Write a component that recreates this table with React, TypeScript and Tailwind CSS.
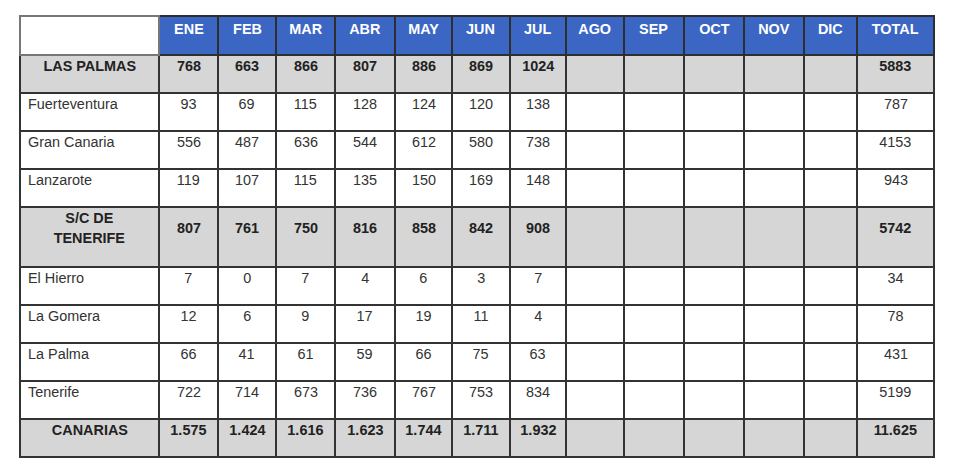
const months = ["ENE", "FEB", "MAR", "ABR", "MAY", "JUN", "JUL", "AGO", "SEP", "OCT", "NOV", "DIC"];
const widths = [139, 59, 58, 59, 60, 57, 58, 56, 58, 60, 60, 60, 53, 77];

type Row = { name: string; values: string[]; total: string; bold?: boolean; tall?: boolean };

const rows: Row[] = [
  { name: "LAS PALMAS", values: ["768", "663", "866", "807", "886", "869", "1024"], total: "5883", bold: true },
  { name: "Fuerteventura", values: ["93", "69", "115", "128", "124", "120", "138"], total: "787" },
  { name: "Gran Canaria", values: ["556", "487", "636", "544", "612", "580", "738"], total: "4153" },
  { name: "Lanzarote", values: ["119", "107", "115", "135", "150", "169", "148"], total: "943" },
  { name: "S/C DE TENERIFE", values: ["807", "761", "750", "816", "858", "842", "908"], total: "5742", bold: true, tall: true },
  { name: "El Hierro", values: ["7", "0", "7", "4", "6", "3", "7"], total: "34" },
  { name: "La Gomera", values: ["12", "6", "9", "17", "19", "11", "4"], total: "78" },
  { name: "La Palma", values: ["66", "41", "61", "59", "66", "75", "63"], total: "431" },
  { name: "Tenerife", values: ["722", "714", "673", "736", "767", "753", "834"], total: "5199" },
  { name: "CANARIAS", values: ["1.575", "1.424", "1.616", "1.623", "1.744", "1.711", "1.932"], total: "11.625", bold: true },
];

// the source sheet uses a narrow face; squeeze Arial-width text to match
function T({ children, left }: { children: React.ReactNode; left?: boolean }) {
  return (
    <span className={`inline-block scale-x-[0.93] ${left ? "origin-left" : "origin-center"}`}>
      {children}
    </span>
  );
}

export default function App() {
  return (
    <div className="h-[472px] w-[955px] bg-white pl-[19px] pt-[15px] font-['Liberation_Sans',Arial,sans-serif] text-[15.5px] leading-[17px]">
      <table className="w-[914px] table-fixed border-collapse border-2 border-[#555]">
        <colgroup>
          {widths.map((w, i) => (
            <col key={i} style={{ width: w }} />
          ))}
        </colgroup>
        <thead>
          <tr className="h-[39px]">
            <th className="border-2 border-[#777] bg-white" />
            {[...months, "TOTAL"].map((m) => (
              <th
                key={m}
                className="border-2 border-[#2e2e2e] bg-[#3b66c4] pt-[3px] align-top font-bold text-white"
              >
                <T>{m}</T>
              </th>
            ))}
          </tr>
        </thead>
        <tbody>
          {rows.map((r) => {
            const cell = r.bold
              ? "border-2 border-[#333] bg-[#d6d6d6] text-center align-top font-bold text-[#222]"
              : "border-2 border-[#333] bg-white text-center align-top text-[#333]";
            const pad = r.tall ? "pt-[11px]" : "pt-[1px]";
            return (
              <tr key={r.name} className={r.tall ? "h-[60px]" : "h-[38px]"}>
                <td
                  className={
                    r.bold
                      ? "border-2 border-[#333] bg-[#d6d6d6] px-2 pt-0 text-center align-top font-bold leading-[20px] text-[#222]"
                      : "border-2 border-[#333] bg-white px-[7px] pt-[1px] align-top text-[#333]"
                  }
                >
                  {r.tall ? (
                    <T>
                      S/C DE
                      <br />
                      TENERIFE
                    </T>
                  ) : (
                    <T left={!r.bold}>{r.name}</T>
                  )}
                </td>
                {months.map((m, i) => (
                  <td key={m} className={`${cell} ${pad}`}>
                    {r.values[i] ? <T>{r.values[i]}</T> : null}
                  </td>
                ))}
                <td className={`${cell} ${pad}`}>
                  <T>{r.total}</T>
                </td>
              </tr>
            );
          })}
        </tbody>
      </table>
    </div>
  );
}
